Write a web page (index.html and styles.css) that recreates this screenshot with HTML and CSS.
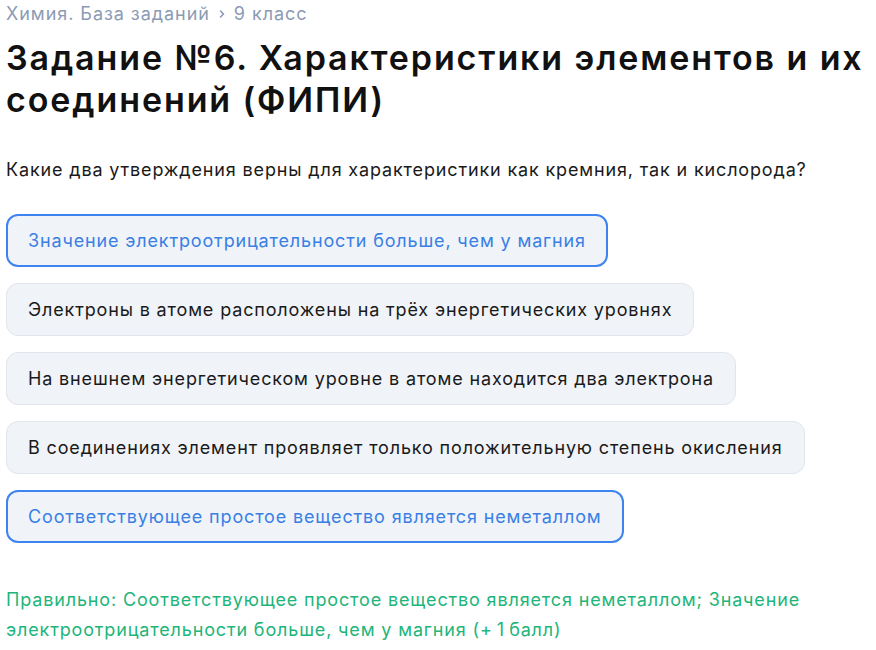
FILE: index.html
```html
<!DOCTYPE html>
<html lang="ru">
<head>
<meta charset="utf-8">
<link rel="stylesheet" href="styles.css">
</head>
<body>
<main class="page">
  <nav class="crumbs">
    <span>Химия. База заданий</span>
    <svg class="chev" width="8" height="10" viewBox="0 0 8 10"><path d="M2.5 2 L5.5 5 L2.5 8" fill="none" stroke="currentColor" stroke-width="1.6" stroke-linecap="round" stroke-linejoin="round"/></svg>
    <span>9 класс</span>
  </nav>
  <h1 class="title">Задание №6. Характеристики элементов и их соединений (ФИПИ)</h1>
  <p class="question">Какие два утверждения верны для характеристики как кремния, так и кислорода?</p>
  <div class="options">
    <div class="option selected">Значение электроотрицательности больше, чем у магния</div>
    <div class="option">Электроны в атоме расположены на трёх энергетических уровнях</div>
    <div class="option">На внешнем энергетическом уровне в атоме находится два электрона</div>
    <div class="option">В соединениях элемент проявляет только положительную степень окисления</div>
    <div class="option selected">Соответствующее простое вещество является неметаллом</div>
  </div>
  <p class="result">Правильно: Соответствующее простое вещество является неметаллом; Значение электроотрицательности больше, чем у магния (+&#8201;1&#8201;балл)</p>
</main>
</body>
</html>
```

FILE: styles.css
```css
* { box-sizing: border-box; }
html, body { margin: 0; padding: 0; background: #fff; }
body {
  font-family: Inter, "Noto Sans", sans-serif;
  color: #111;
}
.page {
  padding: 0 6px;
  width: 876px;
}
.crumbs {
  display: flex;
  align-items: center;
  gap: 6px;
  color: #8c9bb4;
  font-size: 18px;
  letter-spacing: 0.95px;
  line-height: 22px;
  padding-top: 3px;
}
.chev { margin: 0 2px; }
.title {
  margin: 12px 0 0;
  font-size: 34px;
  line-height: 42px;
  font-weight: 600;
  letter-spacing: 1.9px;
  color: #111;
}
.question {
  margin: 37px 0 0;
  font-size: 18px;
  letter-spacing: 0.85px;
  line-height: 24px;
  color: #1a1a1a;
}
.options {
  margin-top: 32px;
  display: flex;
  flex-direction: column;
  align-items: flex-start;
  gap: 16px;
}
.option {
  background: #f0f3f8;
  border: 1px solid #e1e5ec;
  border-radius: 12px;
  height: 53px;
  padding: 0 21px;
  display: flex;
  align-items: center;
  font-size: 18px;
  letter-spacing: 0.85px;
  color: #1a1a1a;
}
.option.selected {
  border: 2px solid #3e84f0;
  color: #3a7fe4;
  padding: 0 20px;
}
.result {
  margin: 42px 0 0;
  font-size: 18px;
  letter-spacing: 0.85px;
  line-height: 30px;
  color: #1db57a;
  width: 830px;
}
```
